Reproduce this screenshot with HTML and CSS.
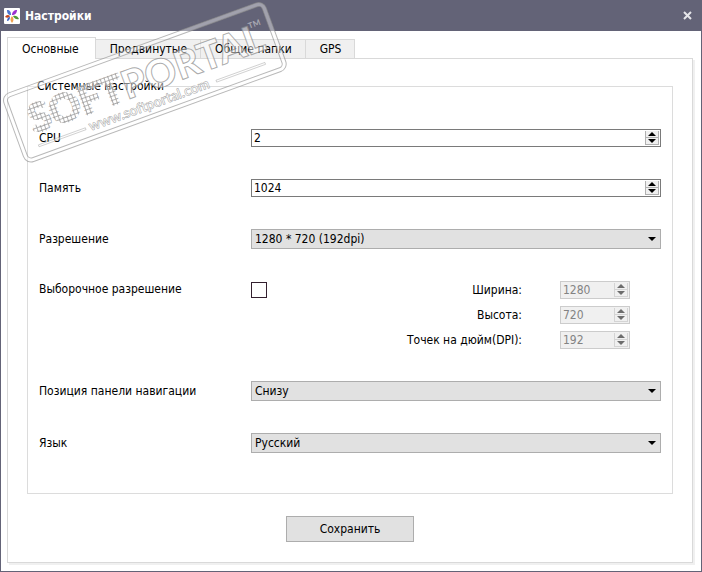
FILE: index.html
```html
<!DOCTYPE html>
<html lang="ru">
<head>
    <meta charset="UTF-8">
    <meta name="viewport" content="width=device-width, initial-scale=1.0">
    <title>Настройки</title>
    <link rel="stylesheet" href="styles.css">
</head>
<body>
    <div class="window">
        <header class="titlebar">
            <svg class="logo" viewBox="0 0 16 16" aria-hidden="true">
                <rect width="16" height="16" rx="1" fill="#fff"/>
                <path d="M7 7C4 7 3 5 3 2c3 0 4 2 4 5z" fill="#4a74cc"/>
                <path d="M8 7c0-3 2-5 5-5 0 3-2 5-5 5z" fill="#9b2fd0"/>
                <path d="M6 8C4 6 2 7 1 9c2 1 4 1 5-1z" fill="#c0441c"/>
                <path d="M9 8c2-1 5 0 6 3-3 1-5-1-6-3z" fill="#4f9a35"/>
                <path d="M8 8c2 2 2 5 0 7-2-2-2-5 0-7z" fill="#efa04c"/>
                <path d="M6 9c-2 0-3 2-3 4 2 0 3-2 3-4z" fill="#3a62c4"/>
            </svg>
            <h1>Настройки</h1>
            <button type="button" class="close" aria-label="Закрыть">
                <svg viewBox="0 0 9 9"><path d="M1 1l7 7M8 1l-7 7"/></svg>
            </button>
        </header>

        <main class="content">
            <nav class="tabs" role="tablist">
                <button type="button" class="tab active" role="tab" aria-selected="true">Основные</button>
                <button type="button" class="tab" role="tab">Продвинутые</button>
                <button type="button" class="tab" role="tab">Общие папки</button>
                <button type="button" class="tab" role="tab">GPS</button>
            </nav>

            <form class="pane">
                <fieldset>
                    <legend>Системные настройки</legend>
                    <div class="row">
                        <label for="cpu">CPU</label>
                        <div class="spinner">
                            <input type="number" id="cpu" value="2">
                            <div class="steps">
                                <button type="button" class="up" aria-label="Больше"></button>
                                <button type="button" class="down" aria-label="Меньше"></button>
                            </div>
                        </div>
                    </div>
                    <div class="row">
                        <label for="memory">Память</label>
                        <div class="spinner">
                            <input type="number" id="memory" value="1024">
                            <div class="steps">
                                <button type="button" class="up" aria-label="Больше"></button>
                                <button type="button" class="down" aria-label="Меньше"></button>
                            </div>
                        </div>
                    </div>
                    <div class="row">
                        <label for="resolution">Разрешение</label>
                        <div class="dropdown">
                            <select id="resolution"><option>1280 * 720 (192dpi)</option></select>
                        </div>
                    </div>
                    <div class="row custom">
                        <label for="custom">Выборочное разрешение</label>
                        <div class="custom-size">
                            <input type="checkbox" id="custom">
                            <div class="sizes">
                                <label for="width">Ширина:</label>
                                <div class="spinner disabled">
                                    <input type="number" id="width" value="1280" disabled>
                                    <div class="steps">
                                        <button type="button" class="up" aria-label="Больше" disabled></button>
                                        <button type="button" class="down" aria-label="Меньше" disabled></button>
                                    </div>
                                </div>
                                <label for="height">Высота:</label>
                                <div class="spinner disabled">
                                    <input type="number" id="height" value="720" disabled>
                                    <div class="steps">
                                        <button type="button" class="up" aria-label="Больше" disabled></button>
                                        <button type="button" class="down" aria-label="Меньше" disabled></button>
                                    </div>
                                </div>
                                <label for="dpi">Точек на дюйм(DPI):</label>
                                <div class="spinner disabled">
                                    <input type="number" id="dpi" value="192" disabled>
                                    <div class="steps">
                                        <button type="button" class="up" aria-label="Больше" disabled></button>
                                        <button type="button" class="down" aria-label="Меньше" disabled></button>
                                    </div>
                                </div>
                            </div>
                        </div>
                    </div>
                    <div class="row">
                        <label for="navbar">Позиция панели навигации</label>
                        <div class="dropdown">
                            <select id="navbar"><option>Снизу</option></select>
                        </div>
                    </div>
                    <div class="row">
                        <label for="language">Язык</label>
                        <div class="dropdown">
                            <select id="language"><option>Русский</option></select>
                        </div>
                    </div>
                </fieldset>
                <button type="submit" class="save">Сохранить</button>
            </form>
        </main>

        <!-- stamp over the top left corner -->
        <svg class="stamp" viewBox="0 0 290 168" width="290" height="168">
            <defs>
                <pattern id="cells" width="4" height="4" patternUnits="userSpaceOnUse">
                    <rect width="4" height="4" fill="#fff" fill-opacity=".4"/>
                    <path d="M0 3.5h4M3.5 0v4" stroke="#999" stroke-opacity=".7" fill="none"/>
                </pattern>
            </defs>
            <g transform="translate(-1 95) rotate(-20)">
                <rect class="band" x="3" y="3" width="275" height="69" rx="6"/>
                <rect class="edge" x="1" y="1" width="279" height="73" rx="8"/>
                <rect class="edge" x="5" y="5" width="271" height="65" rx="4"/>
                <text class="soft" x="19" y="48">SOFT</text>
                <text class="portal" x="118" y="48">PORTAL</text>
                <text class="tm" x="257" y="23">TM</text>
                <text class="site" x="73" y="65">www.softportal.com</text>
                <path class="rule" d="M19 60h50v2h-50zM208 60h52v2h-52z"/>
            </g>
        </svg>
    </div>
</body>
</html>
```

FILE: styles.css
```css
* {
    box-sizing: border-box;
}
body {
    margin: 0;
    font-family: "DejaVu Sans Condensed", Tahoma, sans-serif;
    font-size: 12px;
    line-height: 16px;
    color: #000;
}
button,
input,
select {
    font: inherit;
    color: inherit;
    margin: 0;
    padding: 0;
    border: none;
    border-radius: 0;
    background: none;
}
.window {
    position: relative;
    display: flex;
    flex-direction: column;
    min-height: 100vh;
    border: 1px solid #636377;
    border-top: none;
    background-color: #fff;
}
.titlebar {
    display: flex;
    align-items: center;
    gap: 5px;
    height: 31px;
    padding: 0 9px 0 3px;
    background-color: #636377;
    color: #fff;
}
.logo {
    width: 16px;
    height: 16px;
}
h1 {
    flex: 1;
    margin: 0;
    font-size: 12px;
    font-weight: bold;
}
.close {
    display: flex;
}
.close svg {
    width: 9px;
    height: 9px;
    stroke: #e6e6ea;
    stroke-width: 2;
}
.content {
    flex: 1;
    display: flex;
    flex-direction: column;
    padding: 6px 8px 8px 6px;
}
.tabs {
    display: flex;
    align-items: flex-end;
}
.tab {
    height: 19px;
    padding: 0 13px 0 14px;
    border: 1px solid #d9d9d9;
    border-width: 1px 1px 0 0;
    background-color: #f0f0f0;
}
.tab.active {
    height: 22px;
    margin-bottom: -1px;
    padding: 0 16px 0 14px;
    border-left-width: 1px;
    background-color: #fff;
    z-index: 1;
}
.pane {
    flex: 1;
    display: flex;
    flex-direction: column;
    padding: 19px;
    border: 1px solid #d9d9d9;
    box-shadow: 2px 2px 0 #f0f0f0;
}
fieldset {
    display: flex;
    flex-direction: column;
    gap: 32px;
    min-width: 0;
    margin: 0;
    padding: 35px 11px 40px;
    border: 1px solid #dcdcdc;
}
legend {
    margin-left: -3px;
    padding: 0 1px;
}
.row {
    display: grid;
    grid-template-columns: 212px 1fr;
    align-items: center;
}
.row.custom {
    align-items: start;
}
.spinner {
    display: flex;
    height: 18px;
    padding: 1px;
    border: 1px solid #7a7a7a;
    background-color: #fff;
}
.spinner input {
    flex: 1;
    min-width: 0;
    padding-left: 1px;
    outline: none;
    appearance: textfield;
}
.spinner input::-webkit-inner-spin-button {
    appearance: none;
    margin: 0;
}
.steps {
    display: flex;
    flex-direction: column;
    width: 14px;
    border: 1px solid #b0b0b0;
    border-top: none;
    background-color: #f0f0f0;
}
.steps button {
    flex: 1;
    display: flex;
    align-items: center;
    justify-content: center;
}
.steps .up {
    border-bottom: 1px solid #b0b0b0;
}
.steps button::before {
    content: "";
    width: 8px;
    height: 4px;
    background-color: #000;
    clip-path: polygon(50% 0, 100% 100%, 0 100%);
}
.steps .down::before {
    clip-path: polygon(0 0, 100% 0, 50% 100%);
}
.spinner.disabled {
    border-color: #cccccc;
    background-color: #f0f0f0;
    color: #838383;
}
.disabled .steps,
.disabled .steps .up {
    border-color: #d4d4d4;
}
.disabled .steps button::before {
    background-color: #6d6d6d;
}
.dropdown {
    display: grid;
    align-items: center;
}
.dropdown select {
    grid-area: 1 / 1;
    height: 20px;
    padding: 0 20px 0 3px;
    border: 1px solid #adadad;
    background-color: #e1e1e1;
    appearance: none;
}
.dropdown::after {
    content: "";
    grid-area: 1 / 1;
    justify-self: end;
    width: 8px;
    height: 4px;
    margin-right: 5px;
    background-color: #000;
    clip-path: polygon(0 0, 100% 0, 50% 100%);
    pointer-events: none;
}
.custom-size {
    display: flex;
    justify-content: space-between;
    align-items: flex-start;
    padding-right: 31px;
}
.custom-size input[type="checkbox"] {
    width: 16px;
    height: 16px;
    margin-top: 1px;
    border: 1px solid #33202f;
    background-color: #fff;
    appearance: none;
}
.custom-size input[type="checkbox"]:checked {
    box-shadow: inset 0 0 0 3px #fff;
    background-color: #33202f;
}
.sizes {
    display: grid;
    grid-template-columns: auto 70px;
    gap: 7px 38px;
    align-items: center;
    text-align: right;
}
.save {
    align-self: center;
    width: 128px;
    height: 26px;
    margin-top: 22px;
    border: 1px solid #adadad;
    background-color: #e1e1e1;
}
.stamp {
    position: absolute;
    top: 0;
    left: 0;
    pointer-events: none;
    font-family: Lato, sans-serif;
    font-weight: 700;
}
.band {
    fill: none;
    stroke: #fff;
    stroke-opacity: 0.4;
    stroke-width: 4;
}
.edge {
    fill: none;
    stroke: #888;
    stroke-opacity: 0.6;
}
.soft {
    font-size: 39px;
    font-weight: 900;
    fill: url(#cells);
    stroke: url(#cells);
    stroke-width: 2;
}
.portal {
    font-size: 39px;
    font-weight: 900;
}
.portal,
.site,
.rule {
    fill: #fff;
    fill-opacity: 0.5;
    stroke: #888;
    stroke-opacity: 0.7;
    stroke-width: 1;
}
.site {
    font-size: 14px;
    stroke-width: 0.6;
}
.rule {
    stroke-width: 0.5;
}
.tm {
    font-size: 8px;
    fill: #aaaab4;
}
```
